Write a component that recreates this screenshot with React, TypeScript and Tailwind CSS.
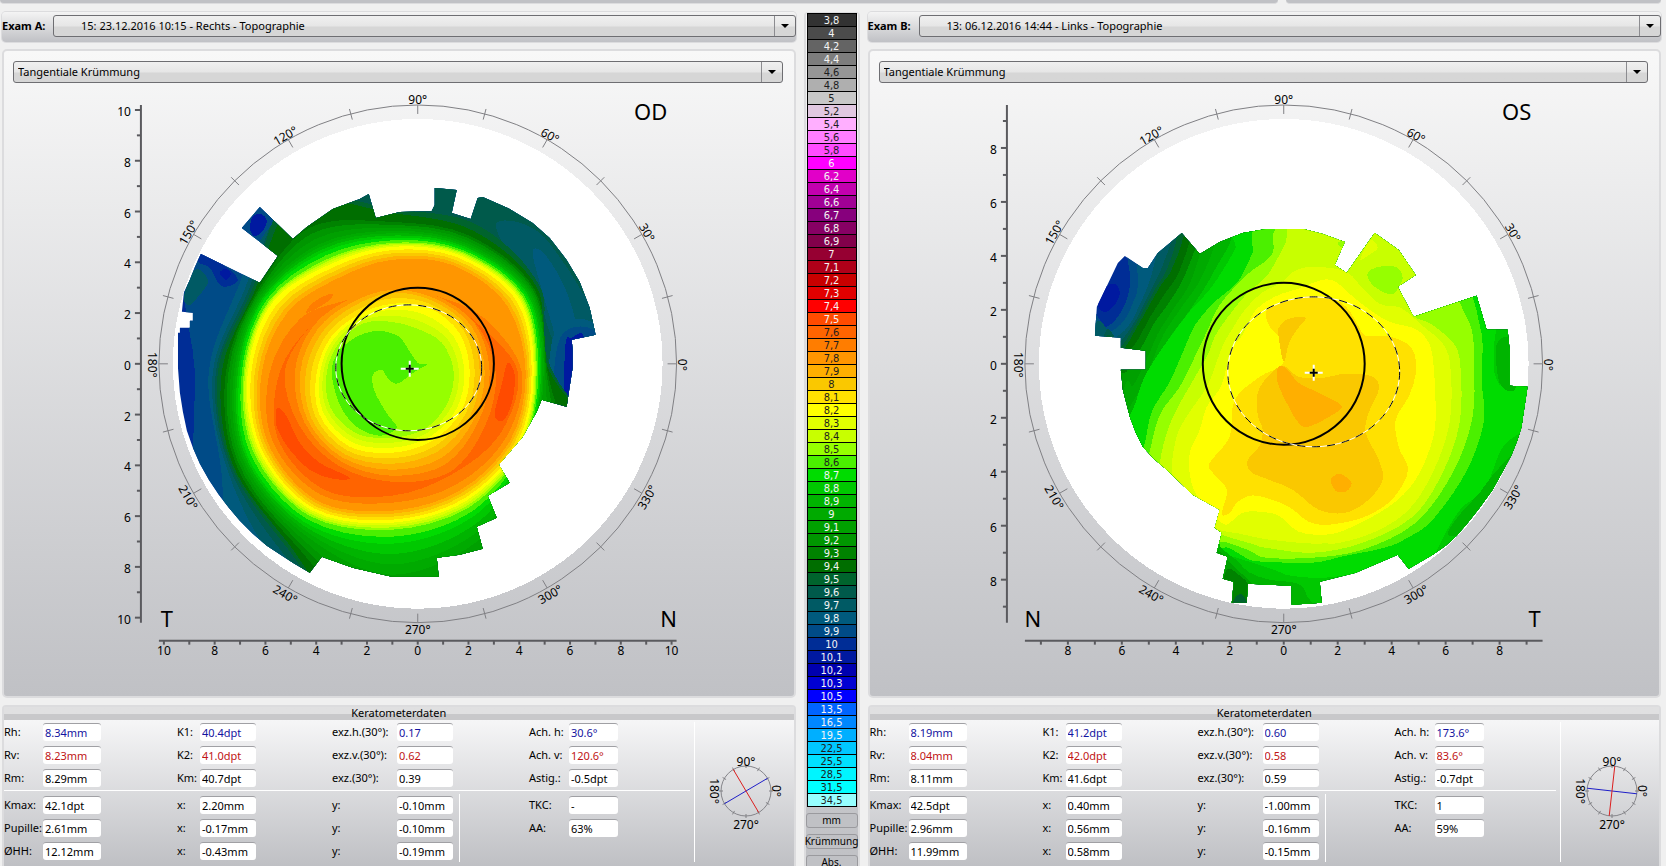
import React, { useId } from "react";

type Point = [number, number];
type Band = { level: number; points: Point[] };
type Tone = "blue" | "red" | "black";

// --- Colour scale: label, fill, text colour ---
const SCALE: [string, string, "w" | "b"][] = [
  ["3,8", "#323232", "w"],
  ["4", "#4b4b4b", "w"],
  ["4,2", "#646464", "w"],
  ["4,4", "#7d7d7d", "w"],
  ["4,6", "#969696", "b"],
  ["4,8", "#afafaf", "b"],
  ["5", "#c8c8c8", "b"],
  ["5,2", "#e1c8e1", "b"],
  ["5,4", "#ffafff", "b"],
  ["5,6", "#ff7dff", "b"],
  ["5,8", "#ff4bff", "b"],
  ["6", "#ff00ff", "w"],
  ["6,2", "#e100c8", "w"],
  ["6,4", "#c300af", "w"],
  ["6,6", "#a00096", "w"],
  ["6,7", "#87007d", "w"],
  ["6,8", "#870064", "w"],
  ["6,9", "#82004b", "w"],
  ["7", "#960032", "w"],
  ["7,1", "#af0019", "w"],
  ["7,2", "#c80000", "w"],
  ["7,3", "#e10000", "w"],
  ["7,4", "#ff0000", "w"],
  ["7,5", "#ff4b00", "w"],
  ["7,6", "#ff6400", "b"],
  ["7,7", "#ff7d00", "b"],
  ["7,8", "#ff9600", "b"],
  ["7,9", "#ffaf00", "b"],
  ["8", "#fac800", "b"],
  ["8,1", "#ffe100", "b"],
  ["8,2", "#ffff00", "b"],
  ["8,3", "#e1ff00", "b"],
  ["8,4", "#c8ff00", "b"],
  ["8,5", "#96ff00", "b"],
  ["8,6", "#4bf000", "b"],
  ["8,7", "#00dc00", "w"],
  ["8,8", "#00c800", "w"],
  ["8,9", "#00b400", "w"],
  ["9", "#00aa00", "w"],
  ["9,1", "#00a000", "w"],
  ["9,2", "#009600", "w"],
  ["9,3", "#008200", "w"],
  ["9,4", "#006e00", "w"],
  ["9,5", "#00642d", "w"],
  ["9,6", "#005a4b", "w"],
  ["9,7", "#005a64", "w"],
  ["9,8", "#005a7d", "w"],
  ["9,9", "#004b87", "w"],
  ["10", "#002d96", "w"],
  ["10,1", "#0019a0", "w"],
  ["10,2", "#0000af", "w"],
  ["10,3", "#0000d2", "w"],
  ["10,5", "#0000ff", "w"],
  ["13,5", "#0064ff", "w"],
  ["16,5", "#0087ff", "w"],
  ["19,5", "#00afff", "w"],
  ["22,5", "#00c8ff", "b"],
  ["25,5", "#00e1ff", "b"],
  ["28,5", "#00f5ff", "b"],
  ["31,5", "#00ffff", "b"],
  ["34,5", "#96ffff", "b"],
];

// Levels are stored in tenths of a millimetre
const LEVEL_COLORS = new Map(
  SCALE.map(([label, fill]) => [
    Math.round(parseFloat(label.replace(",", ".")) * 10),
    fill,
  ])
);

const pts = (s: string): Point[] =>
  s.split(" ").map((p) => p.split(",").map(Number) as Point);

const band = (level: number, s: string): Band => ({ level, points: pts(s) });

// Closed Catmull-Rom curve through all points
function smoothPath(points: Point[]) {
  const n = points.length;
  let d = `M${points[0][0]} ${points[0][1]}`;
  for (let i = 0; i < n; i++) {
    const [a, b, c, e] = [-1, 0, 1, 2].map((k) => points[(i + k + n) % n]);
    d += `C${b[0] + (c[0] - a[0]) / 6} ${b[1] + (c[1] - a[1]) / 6} ${
      c[0] - (e[0] - b[0]) / 6
    } ${c[1] - (e[1] - b[1]) / 6} ${c[0]} ${c[1]}`;
  }
  return d + "Z";
}

// Radii every 30 degrees, filled up with one loop per 0.1 mm between two rows
function ringBands(center: Point, rows: [number, number[]][]): Band[] {
  const loop = (level: number, radii: number[]): Band => ({
    level,
    points: radii.map((r, i) => {
      const a = (i * Math.PI) / 6;
      return [center[0] + r * Math.cos(a), center[1] - r * Math.sin(a)];
    }),
  });
  const out = [loop(rows[0][0], rows[0][1])];
  for (let k = 1; k < rows.length; k++) {
    const [from, a] = rows[k - 1];
    const [to, b] = rows[k];
    const steps = Math.max(1, Math.abs(to - from));
    for (let s = 1; s <= steps; s++) {
      const t = s / steps;
      out.push(
        loop(
          Math.round(from + (to - from) * t),
          a.map((r, i) => r + (b[i] - r) * t)
        )
      );
    }
  }
  return out;
}

interface Eye {
  id: string;
  exam: string;
  examValue: string;
  side: string;
  leftMark: string;
  rightMark: string;
  origin: Point;
  pxPerMm: number;
  maxMm: number;
  pupil: { cx: number; cy: number; rx: number; ry: number };
  cross: Point;
  outline: string;
  bands: Band[];
  axisH: number;
  axisV: number;
  top: [string, string, Tone][][];
  bottom: [string, string, Tone][][];
}

const OD_CENTER: Point = [392, 372];

const OD: Eye = {
  id: "a",
  exam: "Exam A:",
  examValue: "15: 23.12.2016 10:15 - Rechts - Topographie",
  side: "OD",
  leftMark: "T",
  rightMark: "N",
  origin: [418, 364],
  pxPerMm: 25.4,
  maxMm: 10,
  pupil: { cx: -9, cy: 4, rx: 73, ry: 63 },
  cross: [-8, 5],
  outline:
    "178,367 178,333 180,333 180,328 190,328 190,321 193,321 193,313 182,312 184,293 190,280 195,267 201,254 260,283 278,256 242,228 260,207 293,239 307,227 333,209 360,199 369,194 376,218 400,212 432,211 435,205 435,188 457,190 452,213 471,219 478,198 483,197 508,208 533,223 550,238 567,260 580,282 590,308 596,335 572,340 573,350 573,368 570,387 567,407 542,400 537,412 523,437 499,465 510,483 488,496 497,518 477,527 483,549 460,555 437,558 439,577 392,577 353,568 322,557 310,573 293,563 267,546 253,534 240,521 229,508 219,495 209,480 200,464 193,448 187,431 183,412 180,393",
  bands: [
    band(100, "100,100 700,100 700,700 100,700"),
    ...ringBands(OD_CENTER, [
      [99, [300, 300, 300, 300, 226, 235, 197, 225, 300, 300, 300, 300]],
      [98, [300, 300, 300, 300, 218, 176, 183, 197, 300, 300, 300, 300]],
      [97, [300, 300, 300, 300, 213, 169, 179, 191, 225, 300, 300, 300]],
      [96, [300, 300, 300, 300, 208, 165, 176, 188, 213, 300, 300, 300]],
    ]),
    band(97, "497,223 517,222 540,233 560,257 577,283 592,310 600,335 572,345 560,350 550,333 540,300 523,267 503,243"),
    band(98, "533,253 543,252 560,277 570,300 576,325 572,342 560,352 553,327 543,293"),
    band(98, "556,330 600,330 600,420 553,420"),
    band(99, "561,337 600,337 600,420 557,420"),
    band(101, "566,343 572,338 585,340 585,420 562,415 564,390"),
    band(99, "235,228 262,200 274,218 266,232 256,242"),
    band(101, "250,228 253,217 261,214 267,221 262,232 254,236"),
    band(100, "198,252 212,258 230,270 238,280 230,286 220,285 210,268 198,262"),
    band(101, "220,273 226,269 231,274 226,280"),
    band(97, "184,300 188,283 195,270 203,272 208,283 198,297 190,305"),
    ...ringBands(OD_CENTER, [
      [95, [161, 171, 170, 163, 202, 162, 174, 186, 206, 300, 300, 300]],
      [94, [158, 168, 163, 159, 194, 159, 170, 184, 202, 300, 300, 300]],
      [93, [156, 165, 157, 150, 166, 157, 166, 181, 197, 260, 240, 200]],
      [90, [152, 160, 149, 141, 147, 152, 158, 173, 184, 203, 188, 160]],
      [87, [148, 155, 143, 134, 138, 147, 152, 167, 174, 172, 166, 154]],
      [85, [145, 151, 139, 129, 130, 142, 148, 160, 166, 158, 156, 151]],
      [82, [142, 147, 135, 125, 124, 138, 144, 154, 160, 151, 149, 147]],
      [78, [134, 133, 123, 112, 108, 120, 130, 143, 149, 139, 137, 137]],
      [77, [130, 107, 88, 85, 84, 106, 122, 138, 142, 131, 130, 132]],
      [76, [126, 98, 88, 85, 84, 93, 112, 132, 136, 124, 119, 125]],
      [77, [104, 97, 88, 85, 84, 93, 107, 107, 108, 110, 116, 108]],
      [78, [98, 96, 88, 85, 84, 91, 97, 101, 103, 104, 107, 100]],
      [80, [88, 88, 82, 79, 76, 80, 86, 93, 95, 92, 92, 90]],
      [82, [78, 78, 74, 68, 66, 70, 75, 84, 86, 81, 80, 80]],
      [85, [62, 58, 50, 50, 56, 60, 65, 71, 71, 66, 66, 64]],
    ]),
    band(86, "355,338 377,331 398,336 407,347 418,363 428,364 420,369 412,374 397,384 387,377 382,370 373,375 375,392 388,415 397,428 380,436 357,427 340,405 332,373 338,353"),
    band(77, "306,313 313,303 325,296 333,294 330,300 318,308"),
    band(75, "278,408 287,417 300,443 320,463 350,478 333,479 310,470 290,450 278,430 276,417"),
    band(75, "508,363 515,375 513,400 506,418 499,421 495,413 502,385"),
  ],
  axisH: 30.6,
  axisV: 120.6,
  top: [
    [["Rh:", "8.34mm", "blue"], ["K1:", "40.4dpt", "blue"], ["exz.h.(30°):", "0.17", "blue"], ["Ach. h:", "30.6°", "blue"]],
    [["Rv:", "8.23mm", "red"], ["K2:", "41.0dpt", "red"], ["exz.v.(30°):", "0.62", "red"], ["Ach. v:", "120.6°", "red"]],
    [["Rm:", "8.29mm", "black"], ["Km:", "40.7dpt", "black"], ["exz.(30°):", "0.39", "black"], ["Astig.:", "-0.5dpt", "black"]],
  ],
  bottom: [
    [["Kmax:", "42.1dpt", "black"], ["x:", "2.20mm", "black"], ["y:", "-0.10mm", "black"], ["TKC:", "-", "black"]],
    [["Pupille:", "2.61mm", "black"], ["x:", "-0.17mm", "black"], ["y:", "-0.10mm", "black"], ["AA:", "63%", "black"]],
    [["ØHH:", "12.12mm", "black"], ["x:", "-0.43mm", "black"], ["y:", "-0.19mm", "black"]],
  ],
};

const OS: Eye = {
  id: "b",
  exam: "Exam B:",
  examValue: "13: 06.12.2016 14:44 - Links - Topographie",
  side: "OS",
  leftMark: "N",
  rightMark: "T",
  origin: [1284, 364],
  pxPerMm: 27,
  maxMm: 9,
  pupil: { cx: 30, cy: 8, rx: 86, ry: 75 },
  cross: [30, 9],
  outline:
    "1095,336 1097,307 1110,280 1118,263 1125,256 1143,268 1148,268 1158,253 1182,233 1200,254 1220,242 1243,233 1267,229 1303,229 1323,234 1345,242 1335,265 1347,273 1375,233 1399,250 1416,275 1398,287 1414,317 1477,296 1487,330 1508,330 1510,350 1510,386 1528,387 1524,413 1522,427 1518,440 1512,455 1504,470 1493,490 1480,508 1469,522 1457,536 1446,546 1433,555 1409,569 1398,555 1356,573 1320,582 1322,603 1292,605 1292,586 1248,584 1247,603 1232,603 1234,582 1223,579 1228,557 1217,553 1222,533 1215,528 1220,510 1193,495 1167,470 1154,459 1143,447 1136,433 1130,417 1123,390 1121,370 1146,370 1146,351 1121,348 1121,338",
  bands: [
    band(100, "1000,100 1600,100 1600,700 1000,700"),
    band(101, "1099,300 1106,287 1115,284 1120,293 1115,305 1106,312 1099,309"),
    band(99, "1127,230 1130,275 1129,292 1122,311 1107,327 1080,333 1080,700 1600,700 1600,100 1140,100"),
    band(98, "1137,230 1138,285 1133,303 1124,321 1108,333 1080,338 1080,700 1600,700 1600,100 1150,100"),
    band(97, "1160,230 1153,270 1146,291 1137,311 1128,327 1115,338 1090,350 1080,700 1600,700 1600,100 1170,100"),
    band(96, "1175,220 1163,265 1152,288 1142,309 1131,328 1120,342 1100,360 1080,700 1600,700 1600,100 1180,100"),
    band(95, "1180,220 1168,267 1156,288 1144,310 1132,331 1121,347 1100,365 1080,700 1600,700 1600,100 1190,100"),
    band(94, "1187,220 1173,267 1160,287 1147,310 1134,333 1123,350 1100,370 1080,700 1600,700 1600,100 1200,100"),
    band(93, "1194,220 1180,270 1165,294 1151,316 1138,340 1125,358 1100,400 1080,700 1600,700 1600,100 1210,100"),
    band(91, "1202,220 1186,273 1169,303 1154,324 1142,347 1128,370 1110,410 1080,700 1600,700 1600,100 1215,100"),
    band(90, "1207,220 1192,279 1173,310 1158,334 1148,357 1134,385 1120,410 1080,700 1600,700 1600,100 1220,100"),
    band(89, "1220,220 1203,275 1182,307 1164,334 1151,365 1140,390 1127,412 1100,460 1080,700 1600,700 1600,100 1230,100"),
    band(88, "1236,220 1215,270 1191,309 1167,342 1153,375 1143,398 1128,420 1100,460 1080,700 1600,700 1600,100 1240,100"),
    band(87, "1248,220 1235,250 1212,287 1192,309 1172,335 1156,358 1143,381 1132,412 1110,450 1205,552 1225,555 1243,560 1274,570 1291,576 1325,578 1365,572 1395,562 1420,580 1446,533 1463,507 1485,490 1505,445 1540,420 1545,380 1508,388 1496,377 1494,350 1497,320 1490,290 1440,200"),
    band(86, "1270,220 1252,255 1238,282 1215,302 1196,324 1184,350 1170,382 1152,412 1144,447 1130,480 1205,545 1228,548 1250,560 1266,562 1313,563 1346,556 1385,548 1408,538 1433,520 1466,473 1484,423 1482,380 1483,345 1480,325 1470,290 1430,200"),
    band(85, "1288,220 1272,255 1247,275 1220,305 1207,332 1195,357 1180,387 1160,415 1149,455 1140,490 1205,537 1228,543 1250,551 1266,558 1313,558 1363,550 1416,523 1453,473 1473,417 1474,360 1472,330 1457,295 1420,200"),
    band(84, "1300,220 1285,245 1268,275 1248,293 1232,312 1216,335 1208,355 1193,381 1171,422 1160,463 1160,500 1210,530 1228,537 1255,545 1266,548 1313,553 1363,543 1413,517 1443,473 1460,423 1461,370 1455,345 1433,325 1413,312 1430,270 1400,215"),
    band(83, "1313,267 1295,271 1281,283 1262,293 1245,310 1232,330 1222,348 1208,385 1186,418 1176,440 1172,475 1180,510 1222,528 1243,532 1270,538 1313,546 1363,537 1406,513 1433,473 1450,423 1451,370 1444,345 1423,326 1401,308 1380,304 1360,285 1345,271"),
    band(84, "1222,525 1240,520 1260,515 1276,520 1300,535 1330,545 1300,550 1260,545 1225,535"),
    band(83, "1218,524 1238,516 1258,513 1274,514 1286,521 1300,533 1340,538 1320,544 1270,540 1240,534 1218,530"),
    band(82, "1336,282 1323,280 1298,289 1277,296 1256,310 1243,335 1231,350 1222,385 1207,407 1200,430 1190,453 1191,480 1200,500 1222,523 1230,523 1243,513 1260,512 1279,516 1299,532 1323,535 1346,530 1389,507 1416,480 1433,440 1436,407 1433,357 1426,338 1413,328 1390,322 1370,310 1350,294"),
    band(81, "1281,340 1270,327 1266,314 1273,306 1289,300 1313,296 1336,300 1349,310 1358,325 1366,336 1386,336 1406,343 1415,355 1416,375 1409,397 1396,420 1399,447 1408,467 1404,483 1389,503 1363,518 1329,525 1309,522 1289,507 1266,498 1250,496 1237,503 1230,513 1222,514 1227,490 1213,473 1210,463 1230,437 1235,400 1260,377 1283,364"),
    band(80, "1283,366 1299,377 1323,378 1346,374 1373,377 1379,390 1369,413 1366,433 1379,460 1383,480 1369,500 1346,513 1319,510 1293,490 1269,480 1251,472 1248,460 1260,446 1263,430 1258,415 1258,393 1268,377"),
    band(80, "1306,318 1289,319 1279,328 1279,338 1284,362 1289,344 1297,330"),
    band(79, "1278,368 1286,368 1299,383 1319,393 1341,405 1336,413 1309,427 1299,423 1289,407 1278,383"),
    band(79, "1331,480 1339,474 1346,477 1352,484 1346,492 1336,491"),
    band(85, "1368,273 1379,267 1396,267 1403,278 1395,293 1385,293 1372,284"),
    band(83, "1363,253 1371,240 1378,248 1368,256 1361,260"),
    band(85, "1338,243 1345,241 1343,248"),
    band(89, "1497,345 1510,338 1520,360 1515,390 1500,383"),
    band(89, "1515,455 1495,473 1480,493 1460,515 1448,535 1470,530 1500,490"),
    band(89, "1215,540 1222,549 1236,560 1250,573 1270,580 1298,584 1307,596 1306,610 1210,610"),
    band(91, "1216,552 1232,565 1245,577 1256,590 1250,612 1220,600"),
    band(93, "1226,571 1240,576 1250,588 1250,612 1224,612"),
    band(95, "1236,597 1243,595 1247,606 1233,608"),
  ],
  axisH: 173.6,
  axisV: 83.6,
  top: [
    [["Rh:", "8.19mm", "blue"], ["K1:", "41.2dpt", "blue"], ["exz.h.(30°):", "0.60", "blue"], ["Ach. h:", "173.6°", "blue"]],
    [["Rv:", "8.04mm", "red"], ["K2:", "42.0dpt", "red"], ["exz.v.(30°):", "0.58", "red"], ["Ach. v:", "83.6°", "red"]],
    [["Rm:", "8.11mm", "black"], ["Km:", "41.6dpt", "black"], ["exz.(30°):", "0.59", "black"], ["Astig.:", "-0.7dpt", "black"]],
  ],
  bottom: [
    [["Kmax:", "42.5dpt", "black"], ["x:", "0.40mm", "black"], ["y:", "-1.00mm", "black"], ["TKC:", "1", "black"]],
    [["Pupille:", "2.96mm", "black"], ["x:", "0.56mm", "black"], ["y:", "-0.16mm", "black"], ["AA:", "59%", "black"]],
    [["ØHH:", "11.99mm", "black"], ["x:", "0.58mm", "black"], ["y:", "-0.15mm", "black"]],
  ],
};

const polar = (r: number, deg: number): Point => {
  const a = (deg * Math.PI) / 180;
  return [r * Math.cos(a), -r * Math.sin(a)];
};

function RadialTick({ deg, from, to }: { deg: number; from: number; to: number }) {
  const [x1, y1] = polar(from, deg);
  const [x2, y2] = polar(to, deg);
  return <line x1={x1} y1={y1} x2={x2} y2={y2} stroke="#808084" />;
}

function TopographyMap({ eye }: { eye: Eye }) {
  const { origin, pxPerMm, maxMm, pupil, cross } = eye;
  const ticks = Array.from({ length: maxMm * 2 + 1 }, (_, i) => i - maxMm);
  const angles = Array.from({ length: 24 }, (_, i) => i * 15);
  const clipId = `area-${eye.id}`;

  return (
    <svg
      viewBox="0 0 790 613"
      className="block w-full h-auto text-[12px]"
      role="img"
      aria-label={`Topographie ${eye.side}`}
    >
      <defs>
        <clipPath id={clipId}>
          <polygon points={eye.outline} shapeRendering="crispEdges" />
        </clipPath>
      </defs>
      <g transform="translate(414 281)">
        <circle r={245} fill="#fff" shapeRendering="crispEdges" />

        {/* Curvature map */}
        <g
          transform={`translate(${-origin[0]} ${-origin[1]})`}
          clipPath={`url(#${clipId})`}
          shapeRendering="crispEdges"
        >
          {eye.bands.map((b, i) => (
            <path key={i} d={smoothPath(b.points)} fill={LEVEL_COLORS.get(b.level)} />
          ))}
        </g>

        {/* Degree ring */}
        <circle r={259} fill="none" stroke="#808084" />
        {angles.map((deg) =>
          deg % 30 === 0 ? (
            <RadialTick key={deg} deg={deg} from={250} to={259} />
          ) : (
            <RadialTick key={deg} deg={deg} from={253} to={264} />
          )
        )}
        {angles
          .filter((deg) => deg % 30 === 0)
          .map((deg) => {
            const [x, y] = polar(265, deg);
            const turn = deg < 180 ? 90 - deg : 270 - deg;
            return (
              <text
                key={deg}
                transform={`translate(${x} ${y + 1}) rotate(${turn})`}
                textAnchor="middle"
                dominantBaseline="central"
              >
                {deg}°
              </text>
            );
          })}

        {/* Axes */}
        <g stroke="#5a5a5e" strokeWidth={2}>
          <line x1={-277} x2={-277} y1={-259} y2={259} />
          <line x1={-259} x2={259} y1={277} y2={277} />
          {ticks.map((t) => (
            <React.Fragment key={t}>
              <line x1={t % 2 ? -281 : -283} x2={-277} y1={t * pxPerMm} y2={t * pxPerMm} />
              <line x1={t * pxPerMm} x2={t * pxPerMm} y1={277} y2={281} />
            </React.Fragment>
          ))}
        </g>
        {ticks
          .filter((t) => t % 2 === 0)
          .map((t) => (
            <React.Fragment key={t}>
              <text x={-287} y={t * pxPerMm + 6} textAnchor="end">
                {Math.abs(t)}
              </text>
              <text x={t * pxPerMm} y={291} textAnchor="middle">
                {Math.abs(t)}
              </text>
            </React.Fragment>
          ))}

        {/* 3 mm zone and pupil */}
        <circle r={pxPerMm * 3} fill="none" stroke="#000" strokeWidth={2} />
        <ellipse {...pupil} fill="none" stroke="#fff" />
        <ellipse {...pupil} fill="none" stroke="#000" strokeDasharray="8 7" />
        <g transform={`translate(${cross[0]} ${cross[1]})`} strokeWidth={2}>
          <path d="M-9 0H9M0-8V8" stroke="#fff" />
          <path d="M-4 0H4M0-4V4" stroke="#000" />
        </g>

        <g className="text-[22px]" textAnchor="middle">
          <text x={233} y={-244}>{eye.side}</text>
          <text x={-251} y={263}>{eye.leftMark}</text>
          <text x={251} y={263}>{eye.rightMark}</text>
        </g>
      </g>
    </svg>
  );
}

function AxisDial({ h, v }: { h: number; v: number }) {
  const meridian = (deg: number, color: string) => {
    const [x, y] = polar(25, deg);
    return <line x1={-x} y1={-y} x2={x} y2={y} stroke={color} />;
  };
  return (
    <svg viewBox="-50 -50 100 100" className="w-[100px] h-[100px] shrink-0 text-[12px]">
      <circle r={25} fill="none" stroke="#85858a" />
      {Array.from({ length: 12 }, (_, i) => (
        <RadialTick key={i} deg={i * 30} from={23} to={27} />
      ))}
      {meridian(h, "#1e1ec8")}
      {meridian(v, "#dc1e1e")}
      <g textAnchor="middle" dominantBaseline="central">
        <text y={-30}>90°</text>
        <text y={33}>270°</text>
        <text transform="translate(30 0) rotate(90)">0°</text>
        <text transform="translate(-32 0) rotate(90)">180°</text>
      </g>
    </svg>
  );
}

function Dropdown({
  id,
  label,
  value,
  className = "",
}: {
  id: string;
  label?: string;
  value: string;
  className?: string;
}) {
  return (
    <div className="relative flex-1 h-[22px]">
      <select
        id={id}
        aria-label={label}
        className={`w-full h-full appearance-none rounded-[3px] border border-[#6e6e72] bg-linear-to-b from-[#f0f0f0] from-0% via-[#e6e6e6] via-50% to-[#d6d6d6] to-55% text-black ${className}`}
      >
        <option>{value}</option>
      </select>
      <span className="pointer-events-none absolute right-px top-px bottom-px w-[21px] border-l border-[#8c8c90] flex items-center justify-center">
        <svg viewBox="0 0 8 4" className="w-2 h-1">
          <path d="M0 0H8L4 4Z" />
        </svg>
      </span>
    </div>
  );
}

const TONES: Record<Tone, string> = {
  blue: "text-[#1414a0]",
  red: "text-[#c01414]",
  black: "text-black",
};

// Label and box widths of the four value columns
const COLUMNS: [string, string][] = [
  ["w-[39px]", "w-[58px]"],
  ["w-[23px]", "w-[56px]"],
  ["w-[65px]", "w-[56px]"],
  ["w-[40px]", "w-[49px]"],
];

function FieldRow({ fields }: { fields: [string, string, Tone][] }) {
  const rowId = useId();
  return (
    <div className="flex gap-[76px] h-[18px]">
      {fields.map(([label, value, tone], i) => (
        <div key={i} className="flex">
          <label
            htmlFor={`${rowId}-${i}`}
            className={`${COLUMNS[i][0]} shrink-0 whitespace-nowrap leading-[17px]`}
          >
            {label}
          </label>
          <input
            id={`${rowId}-${i}`}
            readOnly
            defaultValue={value}
            className={`${COLUMNS[i][1]} ${TONES[tone]} h-[18px] rounded-[3px] border-t border-[#a0a0a4] bg-white pl-[2px]`}
          />
        </div>
      ))}
    </div>
  );
}

function Keratometer({ eye }: { eye: Eye }) {
  return (
    <section className="flex-1 min-h-[161px] rounded-t-[4px] border-2 border-b-0 border-[#dcdcde] flex flex-col bg-[#c0c1c5]">
      <h2 className="h-[13px] shrink-0 text-center leading-[12px] bg-linear-to-b from-[#e0e0e1] from-50% to-[#c8c8ca] to-55%">
        Keratometerdaten
      </h2>
      <div className="flex-1 flex bg-linear-to-b from-[#f6f6f7] to-[#bfc0c4]">
        <div className="w-[690px] shrink-0">
          <div className="flex flex-col gap-[5px] pt-[3px] pb-[2px]">
            {eye.top.map((fields, i) => (
              <FieldRow key={i} fields={fields} />
            ))}
          </div>
          <div className="h-px mt-px mb-[5px] mr-1 bg-white" />
          <div className="flex">
            <div className="flex flex-col gap-[5px] relative">
              {eye.bottom.map((fields, i) => (
                <FieldRow key={i} fields={fields} />
              ))}
              <div className="absolute left-[455px] -top-[2px] h-[68px] w-px bg-white" />
            </div>
          </div>
        </div>
        <div className="w-px shrink-0 mt-[2px] mb-[4px] bg-white" />
        <div className="flex-1 min-w-0 flex justify-center pt-[21px] pl-1">
          <AxisDial h={eye.axisH} v={eye.axisV} />
        </div>
      </div>
    </section>
  );
}

function EyePanel({ eye }: { eye: Eye }) {
  return (
    <div className="flex-1 min-w-0 flex flex-col gap-[7px]">
      <div className="h-[30px] shrink-0 flex items-start pt-[3px] rounded-[4px] bg-linear-to-b from-[#f4f4f4] to-[#c0c1c5] shadow-[0_0_0_1px_#dcdcde]">
        <label htmlFor={`exam-${eye.id}`} className="w-[51px] shrink-0 font-bold leading-[22px]">
          {eye.exam}
        </label>
        <Dropdown id={`exam-${eye.id}`} value={eye.examValue} className="pl-[27px]" />
      </div>

      <section className="shrink-0 rounded-[5px] border-2 border-[#dcdcde] bg-linear-to-b from-[#f8f8f8] to-[#c0c1c5]">
        <div className="flex pl-[9px] pr-[11px] pt-[10px]">
          <Dropdown
            id={`map-${eye.id}`}
            label="Kartentyp"
            value="Tangentiale Krümmung"
            className="pl-[4px]"
          />
        </div>
        <TopographyMap eye={eye} />
      </section>

      <Keratometer eye={eye} />
    </div>
  );
}

function Legend() {
  return (
    <aside className="w-[56px] shrink-0 rounded-t-[4px] border-2 border-t border-b-0 border-[#dcdcde] bg-linear-to-b from-[#f8f8f8] to-[#c0c1c5] flex flex-col">
      <ul className="mx-px border-x border-b border-black text-center font-['DejaVu_Sans_Condensed','DejaVu_Sans',sans-serif]">
        {SCALE.map(([label, fill, ink]) => (
          <li
            key={label}
            className={`h-[13px] leading-[13px] border-t border-black ${
              ink === "w" ? "text-[#f4f4f4]" : "text-[#1e1e1e]"
            }`}
            style={{ backgroundColor: fill }}
          >
            {label}
          </li>
        ))}
      </ul>
      <div className="flex flex-col gap-[6px] pt-[6px] text-[10px]">
        {["mm", "Krümmung", "Abs."].map((name) => (
          <button
            key={name}
            type="button"
            className="h-[15px] rounded-[3px] border border-[#9a9a9e] bg-[#c0c1c5] leading-[13px] flex justify-center whitespace-nowrap"
          >
            {name}
          </button>
        ))}
      </div>
    </aside>
  );
}

export default function App() {
  return (
    <div className="h-screen overflow-hidden flex flex-col gap-2 bg-[#f0f0f0] font-['Noto_Sans',sans-serif] text-[11px] text-black">
      <div className="h-1 shrink-0 flex gap-2 pr-[5px]">
        <div className="flex-[1278] rounded-b-[4px] bg-[#c0c1c5] border-b border-[#dcdcde]" />
        <div className="flex-[375] rounded-b-[4px] bg-[#c0c1c5] border-b border-[#dcdcde]" />
      </div>
      <main className="flex-1 min-h-0 flex gap-2 pl-[2px] pr-[5px]">
        <EyePanel eye={OD} />
        <Legend />
        <EyePanel eye={OS} />
      </main>
    </div>
  );
}
